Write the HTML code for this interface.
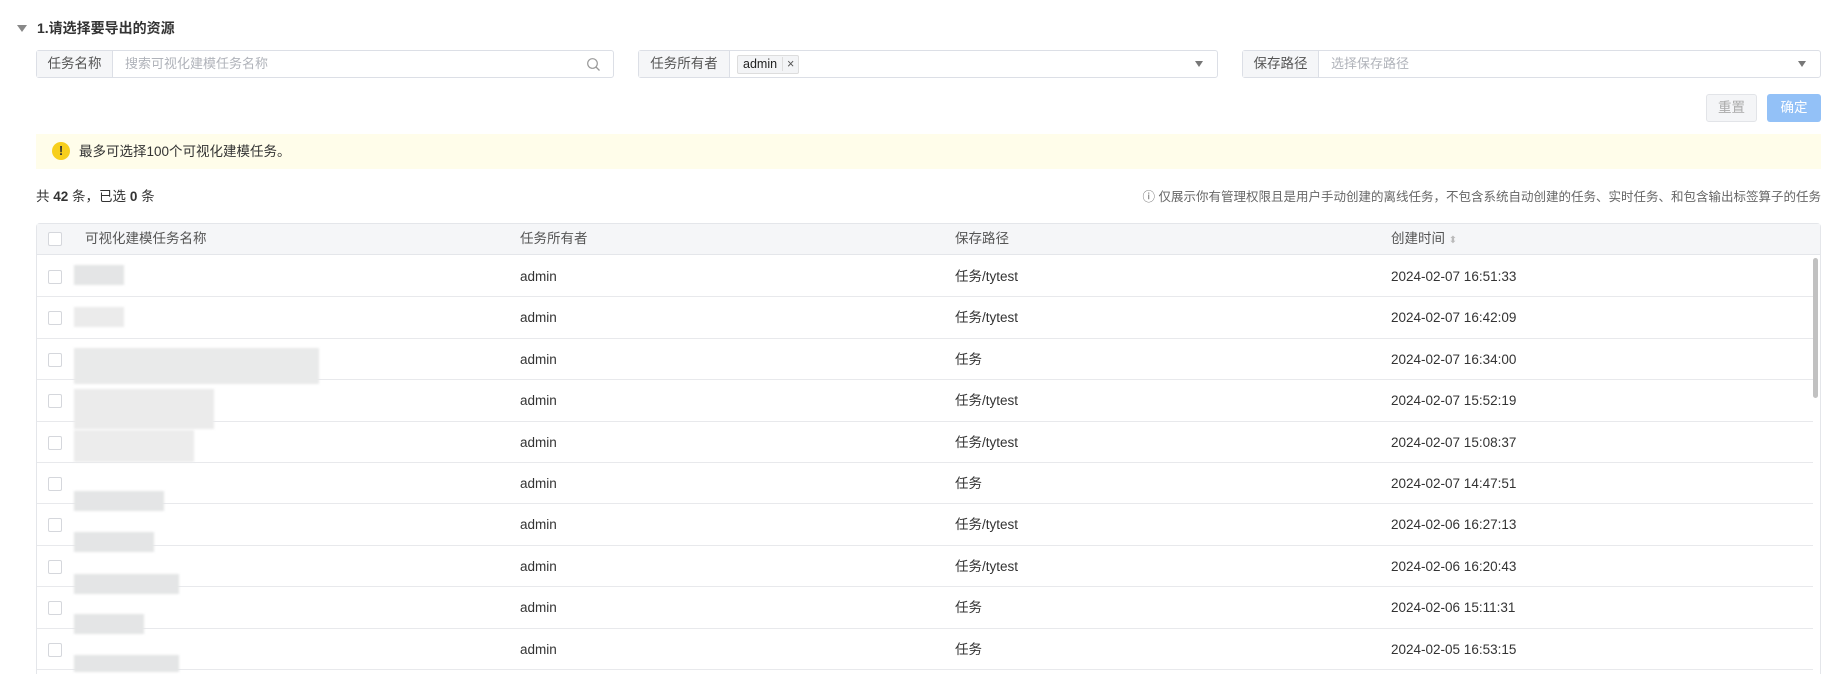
<!DOCTYPE html>
<html><head><meta charset="utf-8"><style>
*{box-sizing:border-box;margin:0;padding:0}
html,body{width:1836px;height:674px;overflow:hidden}
body{background:#fff;font-family:"Liberation Sans","Noto Sans CJK SC",sans-serif;font-size:14px;color:#333;position:relative}
.a{position:absolute}
.inp{position:absolute;top:50px;height:28px;border:1px solid #dcdfe6;border-radius:3px;background:#fff;display:flex;align-items:center}
.lab{height:100%;background:#f5f6f8;border-right:1px solid #dcdfe6;color:#555;display:flex;align-items:center;justify-content:center;font-size:13.5px;line-height:16px}
.ph{color:#b0b3ba;margin-left:12px;font-size:13px;line-height:16px}
.arr{position:absolute;right:14px;top:10px;width:0;height:0;border-left:4.5px solid transparent;border-right:4.5px solid transparent;border-top:6px solid #777}
.row{position:absolute;left:37px;width:1776px;height:41.4px;border-bottom:1px solid #e8e9ec}
.cb{position:absolute;left:11px;top:14px;width:14px;height:14px;border:1px solid #d5d7dc;border-radius:2px;background:#fff}
.c{position:absolute;top:12px;font-size:13.5px;line-height:17px;color:#333}
.blur{position:absolute;background:#e4e5e6;filter:blur(1px)}
</style></head><body>
<div class="a" style="left:17px;top:25px;width:0;height:0;border-left:5px solid transparent;border-right:5px solid transparent;border-top:7px solid #888"></div>
<div class="a" style="left:37px;top:20px;font-size:14px;line-height:17px;font-weight:bold;color:#333">1.请选择要导出的资源</div>

<div class="inp" style="left:36px;width:578px"><div class="lab" style="width:76px">任务名称</div><span class="ph">搜索可视化建模任务名称</span>
<svg class="a" style="right:12px;top:6px" width="15" height="15" viewBox="0 0 15 15"><circle cx="6.5" cy="6.5" r="4.8" fill="none" stroke="#999" stroke-width="1.2"/><path d="M10 10l3.5 3.5" stroke="#999" stroke-width="1.3"/></svg></div>
<div class="inp" style="left:638px;width:580px"><div class="lab" style="width:91px">任务所有者</div>
<div style="margin-left:7px;height:19px;border:1px solid #ddd;background:#f3f4f6;border-radius:2px;display:flex;align-items:center;font-size:12.5px;color:#222"><span style="padding:0 5px">admin</span><span style="border-left:1px solid #ddd;padding:0 4px;color:#555">×</span></div><div class="arr"></div></div>
<div class="inp" style="left:1242px;width:579px"><div class="lab" style="width:76px">保存路径</div><span class="ph">选择保存路径</span><div class="arr"></div></div>

<div class="a" style="left:1706px;top:94px;width:51px;height:28px;border:1px solid #e2e4e8;background:#f4f5f7;border-radius:3px;color:#aaa;font-size:13.5px;text-align:center;line-height:26px">重置</div>
<div class="a" style="left:1767px;top:94px;width:54px;height:28px;background:#93c1f7;border-radius:3px;color:#fff;font-size:13.5px;text-align:center;line-height:28px">确定</div>

<div class="a" style="left:36px;top:134px;width:1785px;height:35px;background:#fffdea"></div>
<div class="a" style="left:52px;top:142px;width:18px;height:18px;border-radius:50%;background:#f7cf1d;color:#333;font-weight:bold;font-size:13px;text-align:center;line-height:18px">!</div>
<div class="a" style="left:79px;top:143px;font-size:13.5px;line-height:17px;color:#333">最多可选择100个可视化建模任务。</div>

<div class="a" style="left:36px;top:188px;font-size:13.5px;line-height:17px;color:#333">共 <b>42</b> 条，已选 <b>0</b> 条</div>
<div class="a" style="right:15px;top:189px;font-size:12.5px;line-height:16px;color:#666">ⓘ 仅展示你有管理权限且是用户手动创建的离线任务，不包含系统自动创建的任务、实时任务、和包含输出标签算子的任务</div>

<div class="a" style="left:36px;top:223px;width:1785px;height:451px;border:1px solid #e4e6ea;border-bottom:none;border-radius:4px 4px 0 0"></div>
<div class="a" style="left:37px;top:224px;width:1783px;height:31px;background:#f5f6f8;border-bottom:1px solid #e4e6ea">
<div class="cb" style="top:8px"></div>
<div class="c" style="left:48px;top:6px;color:#555">可视化建模任务名称</div>
<div class="c" style="left:483px;top:6px;color:#555">任务所有者</div>
<div class="c" style="left:918px;top:6px;color:#555">保存路径</div>
<div class="c" style="left:1354px;top:6px;color:#555">创建时间 <span style="color:#bbb;font-size:10px">⬍</span></div>
</div>

<div class="row" style="top:256px"><div class="cb"></div><div class="c" style="left:483px">admin</div><div class="c" style="left:918px">任务/tytest</div><div class="c" style="left:1354px">2024-02-07 16:51:33</div></div>
<div class="row" style="top:297.4px"><div class="cb"></div><div class="c" style="left:483px">admin</div><div class="c" style="left:918px">任务/tytest</div><div class="c" style="left:1354px">2024-02-07 16:42:09</div></div>
<div class="row" style="top:338.8px"><div class="cb"></div><div class="c" style="left:483px">admin</div><div class="c" style="left:918px">任务</div><div class="c" style="left:1354px">2024-02-07 16:34:00</div></div>
<div class="row" style="top:380.2px"><div class="cb"></div><div class="c" style="left:483px">admin</div><div class="c" style="left:918px">任务/tytest</div><div class="c" style="left:1354px">2024-02-07 15:52:19</div></div>
<div class="row" style="top:421.6px"><div class="cb"></div><div class="c" style="left:483px">admin</div><div class="c" style="left:918px">任务/tytest</div><div class="c" style="left:1354px">2024-02-07 15:08:37</div></div>
<div class="row" style="top:463px"><div class="cb"></div><div class="c" style="left:483px">admin</div><div class="c" style="left:918px">任务</div><div class="c" style="left:1354px">2024-02-07 14:47:51</div></div>
<div class="row" style="top:504.4px"><div class="cb"></div><div class="c" style="left:483px">admin</div><div class="c" style="left:918px">任务/tytest</div><div class="c" style="left:1354px">2024-02-06 16:27:13</div></div>
<div class="row" style="top:545.8px"><div class="cb"></div><div class="c" style="left:483px">admin</div><div class="c" style="left:918px">任务/tytest</div><div class="c" style="left:1354px">2024-02-06 16:20:43</div></div>
<div class="row" style="top:587.2px"><div class="cb"></div><div class="c" style="left:483px">admin</div><div class="c" style="left:918px">任务</div><div class="c" style="left:1354px">2024-02-06 15:11:31</div></div>
<div class="row" style="top:628.6px"><div class="cb"></div><div class="c" style="left:483px">admin</div><div class="c" style="left:918px">任务</div><div class="c" style="left:1354px">2024-02-05 16:53:15</div></div>

<div class="blur" style="left:74px;top:265px;width:50px;height:20px"></div>
<div class="blur" style="left:74px;top:307px;width:50px;height:20px;background:#ebebeb"></div>
<div class="blur" style="left:74px;top:348px;width:245px;height:36px;background:#e9eaea"></div>
<div class="blur" style="left:74px;top:389px;width:140px;height:40px;background:#ebebeb"></div>
<div class="blur" style="left:74px;top:430px;width:120px;height:32px;background:#ececec"></div>
<div class="blur" style="left:74px;top:491px;width:90px;height:20px"></div>
<div class="blur" style="left:74px;top:532px;width:80px;height:20px"></div>
<div class="blur" style="left:74px;top:574px;width:105px;height:20px"></div>
<div class="blur" style="left:74px;top:614px;width:70px;height:20px"></div>
<div class="blur" style="left:74px;top:655px;width:105px;height:17px"></div>

<div class="a" style="left:1813px;top:258px;width:5px;height:140px;background:#c1c1c1;border-radius:3px"></div>
</body></html>
